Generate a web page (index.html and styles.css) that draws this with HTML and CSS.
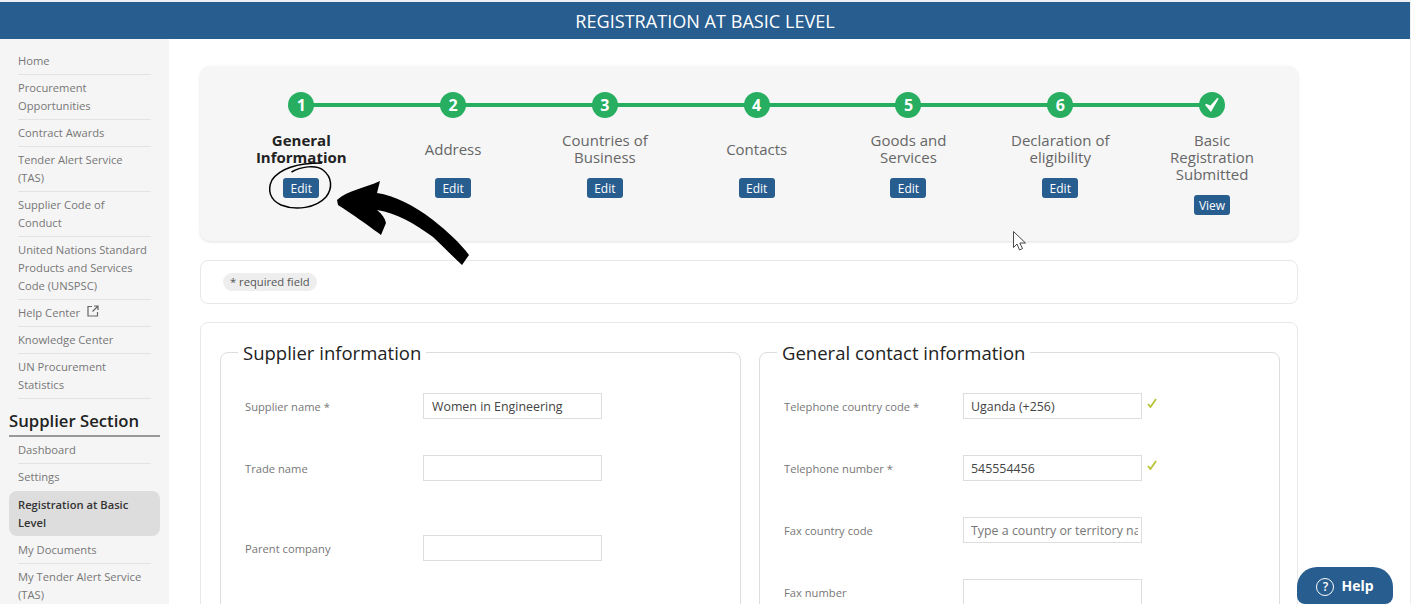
FILE: index.html
```html
<!DOCTYPE html>
<html>
    <head>
        <meta charset="UTF-8">
        <title>Registration at Basic Level</title>
        <link rel="stylesheet" href="styles.css">
    </head>
    <body>
        <header class="topBar">REGISTRATION AT BASIC LEVEL</header>

        <div class="layout">
            <nav class="sidebar">
                <ul class="menu">
                    <li>Home</li>
                    <li>Procurement Opportunities</li>
                    <li>Contract Awards</li>
                    <li>Tender Alert Service (TAS)</li>
                    <li>Supplier Code of Conduct</li>
                    <li>United Nations Standard Products and Services Code (UNSPSC)</li>
                    <li>Help Center
                        <svg class="extIcon" viewBox="0 0 12 12" width="12" height="12">
                            <path d="M5 1.500H1v9.500h9.500V7M7 1h4v4M11 1L5.500 6.500" fill="none" stroke="#666" stroke-width="1.200"/>
                        </svg>
                    </li>
                    <li>Knowledge Center</li>
                    <li>UN Procurement Statistics</li>
                </ul>
                <h3 class="sectionTitle">Supplier Section</h3>
                <ul class="menu">
                    <li>Dashboard</li>
                    <li class="noLine">Settings</li>
                    <li class="active">Registration at Basic Level</li>
                    <li>My Documents</li>
                    <li class="noLine">My Tender Alert Service (TAS)</li>
                </ul>
            </nav>

            <main class="content">
                <section class="stepsPanel">
                    <div class="step">
                        <div class="stepDot">1</div>
                        <div class="stepLabel current">General Information</div>
                        <button class="stepBtn">Edit</button>
                    </div>
                    <div class="step">
                        <div class="stepDot">2</div>
                        <div class="stepLabel">Address</div>
                        <button class="stepBtn">Edit</button>
                    </div>
                    <div class="step">
                        <div class="stepDot">3</div>
                        <div class="stepLabel">Countries of Business</div>
                        <button class="stepBtn">Edit</button>
                    </div>
                    <div class="step">
                        <div class="stepDot">4</div>
                        <div class="stepLabel">Contacts</div>
                        <button class="stepBtn">Edit</button>
                    </div>
                    <div class="step">
                        <div class="stepDot">5</div>
                        <div class="stepLabel">Goods and Services</div>
                        <button class="stepBtn">Edit</button>
                    </div>
                    <div class="step">
                        <div class="stepDot">6</div>
                        <div class="stepLabel">Declaration of eligibility</div>
                        <button class="stepBtn">Edit</button>
                    </div>
                    <div class="step">
                        <div class="stepDot">
                            <svg viewBox="0 0 16 16" width="16" height="16">
                                <path d="M1.700 7.500L6.800 13.700L14 1.300L6.600 9.500Z" fill="#fff" stroke="#fff" stroke-width="1.400"/>
                            </svg>
                        </div>
                        <div class="stepLabel">Basic Registration Submitted</div>
                        <button class="stepBtn">View</button>
                    </div>
                </section>

                <section class="requiredPanel">
                    <span class="requiredChip">* required field</span>
                </section>

                <section class="formPanel">
                    <fieldset class="formGroup">
                        <legend>Supplier information</legend>
                        <div class="formRow">
                            <label>Supplier name *</label>
                            <input type="text" value="Women in Engineering">
                        </div>
                        <div class="formRow tall">
                            <label>Trade name</label>
                            <input type="text">
                        </div>
                        <div class="formRow">
                            <label>Parent company</label>
                            <input type="text">
                        </div>
                    </fieldset>

                    <fieldset class="formGroup contactGroup">
                        <legend>General contact information</legend>
                        <div class="formRow">
                            <label>Telephone country code *</label>
                            <input type="text" value="Uganda (+256)">
                            <svg class="okMark" viewBox="0 0 10 10" width="10" height="10">
                                <path d="M1 6L3.500 9L9 1" fill="none" stroke="#b7c436" stroke-width="1.800"/>
                            </svg>
                        </div>
                        <div class="formRow">
                            <label>Telephone number *</label>
                            <input type="text" value="545554456">
                            <svg class="okMark" viewBox="0 0 10 10" width="10" height="10">
                                <path d="M1 6L3.500 9L9 1" fill="none" stroke="#b7c436" stroke-width="1.800"/>
                            </svg>
                        </div>
                        <div class="formRow">
                            <label>Fax country code</label>
                            <input type="text" placeholder="Type a country or territory name">
                        </div>
                        <div class="formRow">
                            <label>Fax number</label>
                            <input type="text">
                        </div>
                    </fieldset>
                </section>
            </main>
        </div>

        <!-- annotation drawn over the screenshot -->
        <svg class="annotation" viewBox="0 0 1411 604" width="1411" height="604">
            <path d="M291.500 172C300 167 316 164 323 170C332 177 333 188 326 197C316 208 296 211 281 205C270 200 267 190 272 180C279 170 293 163 322 163" fill="none" stroke="#000" stroke-width="1.500"/>
            <path d="M337 200C348 190 365 188 380 181L377 193C395 196 412 204 433 220C448 232 460 243 469 255L462 265C452 256 443 246 433 237C415 224 397 213 377 210C382 214 385 218 386 223L381 235C372 228 352 214 338 205Z" fill="#000"/>
            <path d="M1013.500 231.500V247.500L1017 244L1019.500 250L1022.500 248.500L1019.800 243H1025.500Z" fill="#fff" stroke="#333" stroke-width="0.900"/>
        </svg>

        <button class="helpBtn"><span class="helpIcon">?</span>Help</button>
    </body>
</html>
```

FILE: styles.css
```css
body {
    margin: 0;
    height: 604px;
    overflow: hidden;
    background: #ffffff;
    border-top: 2px solid #eef0f3;
    border-right: 1px solid #eeeeee;
    box-sizing: border-box;
    font-family: "Open Sans", Arial, sans-serif;
    font-size: 11.2px;
    color: #777777;
    position: relative;
}

.topBar {
    height: 37px;
    line-height: 38px;
    background: #285d8f;
    color: #ffffff;
    font-size: 18.1px;
    text-align: center;
}

.layout {
    display: flex;
    height: 565px;
    overflow: hidden;
}

.sidebar {
    width: 169px;
    flex: none;
    box-sizing: border-box;
    padding: 9px 9px 0 9px;
    background: #f5f5f5;
}

.menu {
    list-style: none;
    margin: 0;
    padding: 0;
}

.menu li {
    margin: 0 9px;
    padding: 4px 3px 4px 0;
    line-height: 18px;
    border-bottom: 1px solid #e3e3e3;
}

.menu li.noLine {
    border-bottom-color: transparent;
}

.menu li.active {
    margin: 0 0 1px 0;
    padding: 5px 9px 4px 9px;
    background: #dddddd;
    border-bottom: none;
    border-radius: 8px;
    color: #333333;
    font-weight: 600;
}

.extIcon {
    margin-left: 4px;
    vertical-align: 0;
}

.sectionTitle {
    margin: 10px 0 0 0;
    padding-bottom: 2px;
    border-bottom: 2px solid #999999;
    font-size: 16.7px;
    line-height: 24px;
    font-weight: 600;
    color: #222222;
}

.content {
    padding: 27px 0 0 31px;
    width: 1098px;
}

.stepsPanel {
    display: grid;
    grid-template-columns: repeat(7, 151.8px);
    box-sizing: border-box;
    height: 175px;
    padding: 26px 0 0 25.4px;
    background: #f6f6f6;
    border-radius: 10px;
    box-shadow: 0 1px 3px rgba(0, 0, 0, 0.12);
}

.step {
    position: relative;
    display: flex;
    flex-direction: column;
    align-items: center;
}

.step::after {
    content: "";
    position: absolute;
    top: 11px;
    left: 50%;
    width: 100%;
    height: 4px;
    background: #27ae60;
}

.step:last-child::after {
    display: none;
}

.stepDot {
    position: relative;
    z-index: 1;
    width: 26px;
    height: 26px;
    display: flex;
    align-items: center;
    justify-content: center;
    border-radius: 50%;
    background: #27ae60;
    color: #ffffff;
    font-size: 16px;
    font-weight: 700;
}

.stepLabel {
    width: 112px;
    min-height: 34px;
    margin-top: 14px;
    display: flex;
    align-items: center;
    justify-content: center;
    text-align: center;
    font-size: 15px;
    line-height: 17px;
    color: #666666;
}

.stepLabel.current {
    font-weight: 700;
    color: #222222;
}

.stepBtn {
    margin-top: 12px;
    width: 36px;
    height: 20px;
    padding: 0;
    border: none;
    border-radius: 3px;
    background: #285d8f;
    color: #ffffff;
    font-family: "Open Sans", Arial, sans-serif;
    font-size: 12px;
}

.requiredPanel {
    box-sizing: border-box;
    height: 44px;
    margin-top: 19px;
    padding: 12px 22px;
    border: 1px solid #e8e8e8;
    border-radius: 8px;
    display: flex;
    align-items: flex-start;
}

.requiredChip {
    padding: 0 7px;
    height: 18px;
    line-height: 18px;
    background: #eeeeee;
    border-radius: 9px;
    color: #555555;
}

.formPanel {
    display: grid;
    grid-template-columns: 521px 521px;
    column-gap: 18px;
    margin-top: 18px;
    padding: 17px 0 0 19px;
    height: 400px;
    border: 1px solid #e8e8e8;
    border-radius: 8px;
}

.formGroup {
    margin: 0;
    padding: 28px 24px 0 24px;
    min-width: 0;
    border: 1px solid #dddddd;
    border-radius: 8px;
}

.formGroup legend {
    margin-left: -7px;
    padding: 1px 5px 0 5px;
    font-size: 18.5px;
    line-height: 24px;
    font-weight: 500;
    color: #222222;
}

.formRow {
    display: flex;
    align-items: center;
    margin-bottom: 36px;
}

.formRow.tall {
    margin-bottom: 54px;
}

.formRow label {
    width: 178px;
    flex: none;
    padding-top: 1px;
}

.contactGroup .formRow label {
    width: 179px;
}

.formRow input {
    width: 179px;
    height: 26px;
    box-sizing: border-box;
    padding: 0 3px 0 8px;
    border: 1px solid #dddddd;
    font-family: "Open Sans", Arial, sans-serif;
    font-size: 12.4px;
    color: #444444;
}

.contactGroup .formRow input {
    padding-left: 7px;
}

.formRow input::placeholder {
    color: #777777;
}

.okMark {
    margin: -7px 0 0 5px;
}

.annotation {
    position: absolute;
    top: -2px;
    left: 0;
    pointer-events: none;
}

.helpBtn {
    position: absolute;
    left: 1297px;
    top: 565px;
    width: 96px;
    height: 37px;
    padding: 1px 0 0 0;
    border: none;
    border-radius: 20px 20px 8px 8px;
    background: #285d8f;
    color: #ffffff;
    font-family: "Open Sans", Arial, sans-serif;
    font-size: 14px;
    font-weight: 700;
}

.helpIcon {
    display: inline-block;
    box-sizing: border-box;
    width: 18px;
    height: 18px;
    margin-right: 7px;
    line-height: 15px;
    border: 1.5px solid #ffffff;
    border-radius: 50%;
    font-size: 12px;
    font-weight: 600;
    vertical-align: 0;
}
```
